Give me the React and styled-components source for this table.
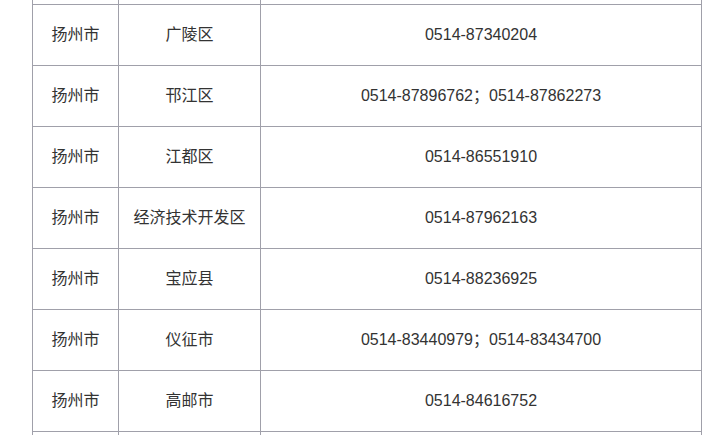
import { Fragment } from "react";
import styled, { createGlobalStyle } from "styled-components";

const GlobalStyle = createGlobalStyle`
  html, body {
    margin: 0;
    padding: 0;
    background: #ffffff;
  }
  body {
    font-family: "Liberation Sans", Arial, "Noto Sans CJK SC", sans-serif;
    color: #333333;
  }
`;

const Page = styled.div`
  padding-left: 32px;
  width: 713px;
  height: 435px;
  overflow: hidden;
  box-sizing: border-box;
`;

const Table = styled.div`
  display: grid;
  grid-template-columns: 86px 142px 441px;
  width: 670px;
  border-left: 1px solid #a0a0aa;
`;

const Cell = styled.div`
  height: ${(p) => (p.$cut ? "4px" : "60px")};
  border-right: 1px solid #a0a0aa;
  border-bottom: 1px solid #a0a0aa;
  display: flex;
  align-items: center;
  justify-content: center;
  font-size: 16px;
  line-height: 20px;
  color: #333333;
  white-space: nowrap;
  overflow: hidden;
`;

const rows = [
  { city: "扬州市", area: "广陵区", phone: "0514-87340204" },
  { city: "扬州市", area: "邗江区", phone: "0514-87896762；0514-87862273" },
  { city: "扬州市", area: "江都区", phone: "0514-86551910" },
  { city: "扬州市", area: "经济技术开发区", phone: "0514-87962163" },
  { city: "扬州市", area: "宝应县", phone: "0514-88236925" },
  { city: "扬州市", area: "仪征市", phone: "0514-83440979；0514-83434700" },
  { city: "扬州市", area: "高邮市", phone: "0514-84616752" },
];

const App = () => {
  return (
    <Page>
      <GlobalStyle />
      <Table>
        {/* row scrolled out above */}
        <Cell $cut />
        <Cell $cut />
        <Cell $cut />
        {rows.map((r) => (
          <Fragment key={r.area}>
            <Cell>{r.city}</Cell>
            <Cell>{r.area}</Cell>
            <Cell>{r.phone}</Cell>
          </Fragment>
        ))}
        <Cell $cut />
        <Cell $cut />
        <Cell $cut />
      </Table>
    </Page>
  );
};

export default App;
